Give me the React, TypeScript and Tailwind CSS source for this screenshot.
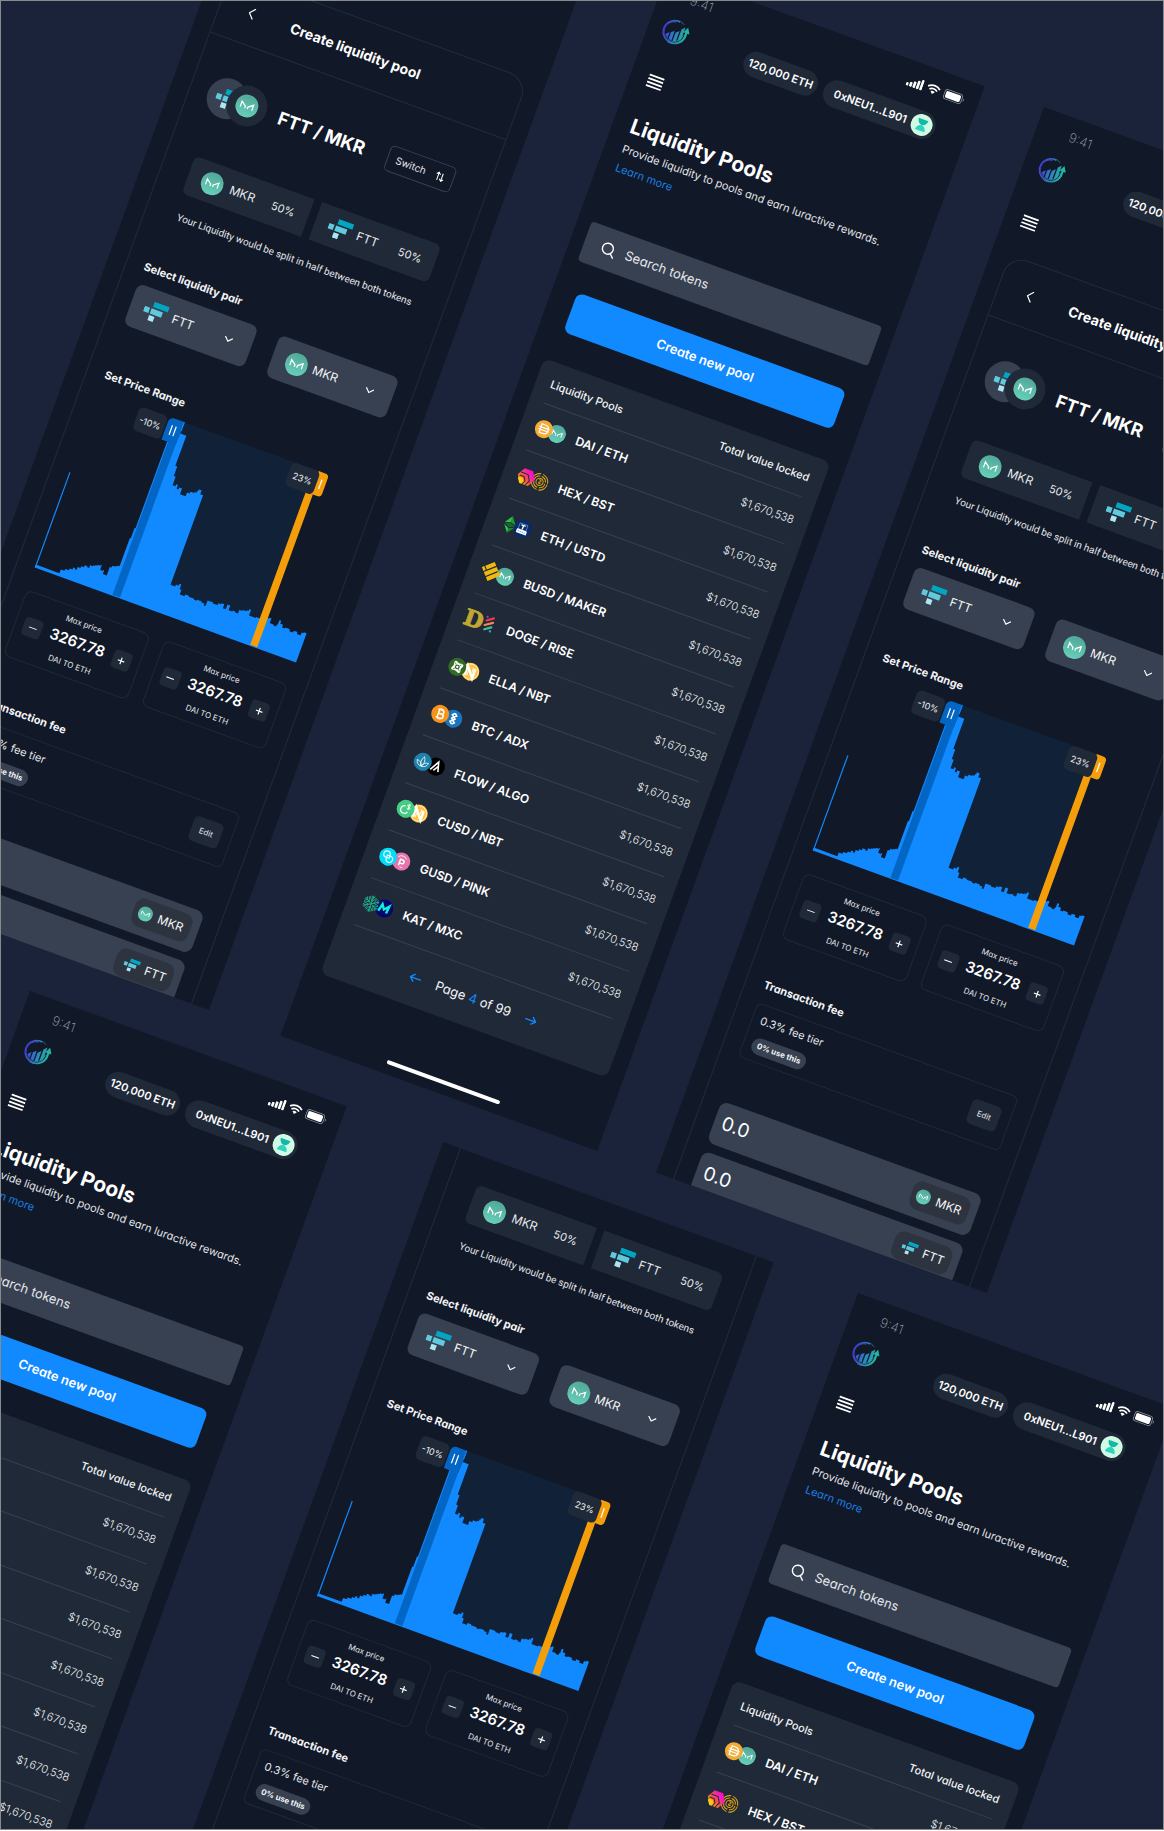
import type { ReactNode } from 'react'
import { useId } from 'react'

/* ---------- token artwork ---------- */

function MakerCoin({ className }: { className: string }) {
  const id = useId()
  return (
    <svg viewBox="0 0 24 24" className={className} aria-hidden="true">
      <defs>
        <linearGradient id={id} x1="0" y1="0" x2="0" y2="1">
          <stop offset="0" stopColor="#52a898" />
          <stop offset="1" stopColor="#66cfba" />
        </linearGradient>
      </defs>
      <circle cx="12" cy="12" r="12" fill={`url(#${id})`} />
      <path d="M5.6 15V8.9l5 3.8V15M13.4 15v-2.3l5-3.8V15" fill="none" stroke="#fff" strokeWidth="1.3" />
    </svg>
  )
}

function FttMark({ className }: { className: string }) {
  return (
    <svg viewBox="0 0 24 20" className={className} aria-hidden="true">
      <path fill="#02a6c2" d="M8 0h16v5.6H8z" />
      <path fill="#5fcade" d="M0 7.2h5.6v5.6H0zM7.2 7.2h12v5.6h-12z" />
      <path fill="#abe6f1" d="M7.2 14.4h5.6V20H7.2z" />
    </svg>
  )
}

function Coin({ fill, children }: { fill: string; children?: ReactNode }) {
  return (
    <svg viewBox="0 0 24 24" className="size-[18px] shrink-0 overflow-visible" aria-hidden="true">
      <circle cx="12" cy="12" r="12" fill={fill} />
      {children}
    </svg>
  )
}

function DaiCoin() {
  return (
    <Coin fill="#f5ac37">
      <path
        d="M7.5 6h4.6c3.6 0 6 2.5 6 6s-2.4 6-6 6H7.5zM5 10.3h14.5M5 13.7h14.5"
        fill="none"
        stroke="#fff"
        strokeWidth="1.6"
      />
    </Coin>
  )
}

function HexCoin() {
  const id = useId()
  return (
    <svg viewBox="0 0 24 24" className="size-[18px] shrink-0" aria-hidden="true">
      <defs>
        <linearGradient id={id} x1="0.9" y1="0" x2="0.1" y2="1">
          <stop offset="0" stopColor="#ff00c8" />
          <stop offset="0.3" stopColor="#f21fb4" />
          <stop offset="0.6" stopColor="#f5573f" />
          <stop offset="1" stopColor="#ffd000" />
        </linearGradient>
      </defs>
      <path d="M6 1.5h12L24 12l-6 10.500H6L0 12z" fill={`url(#${id})`} />
      <g fill="none" stroke="#1f2937" strokeWidth="1.3">
        <path d="M3.500 8h9.500l4.500 7.500-3.500 7" />
        <path d="M2.500 12.500h6.500l3 5-2 5" />
      </g>
      <path d="M3.500 14.500h4l2.500 4-2.500 4h-2L1.500 16.500z" fill="#ffc814" />
    </svg>
  )
}

function BstCoin() {
  return (
    <svg viewBox="0 0 24 24" className="size-[18px] shrink-0" aria-hidden="true">
      <g fill="none" stroke="#e0a412" strokeWidth="1.4">
        <circle cx="12" cy="12" r="11" strokeDasharray="15 2.5" />
        <circle cx="12" cy="12" r="7.8" strokeDasharray="10 2" />
        <circle cx="12" cy="12" r="4.8" />
        <path d="M10.500 9.500c2-.8 3.500 0 3 1.500-.3 1-2.500 1-2.500 2s1.500 1.500 3 .7" />
      </g>
    </svg>
  )
}

function EtcMark() {
  return (
    <svg viewBox="0 0 24 24" className="size-[18px] shrink-0 overflow-visible" aria-hidden="true">
      <path d="M13 .5 20.500 11 13 9z" fill="#1f9a34" />
      <path d="M13 .5 5.500 11 13 9z" fill="#2fc04a" />
      <path d="M5.500 12.300 13 10l7.500 2.300L13 16z" fill="#156b26" />
      <path d="M5.500 14 13 24V17.500z" fill="#35c44f" />
      <path d="M20.500 14 13 24V17.500z" fill="#1a8a2f" />
    </svg>
  )
}

function UstdCoin() {
  return (
    <Coin fill="#072a6c">
      <rect x="6.5" y="5.5" width="11" height="8" fill="none" stroke="#8ea6d6" strokeWidth="0.8" />
      <path d="M9 7.500h6M12 7.500V13" stroke="#fff" strokeWidth="1.8" />
      <rect x="5" y="13.500" width="14" height="5.500" rx="1" fill="#fff" />
      <path d="M7 16.300h10" stroke="#8ea6d6" strokeWidth="1.4" strokeDasharray="2 0.7" />
    </Coin>
  )
}

function BusdMark() {
  return (
    <svg viewBox="0 0 24 24" className="size-[18px] shrink-0 overflow-visible" aria-hidden="true">
      <g fill="#f0b90b" transform="rotate(-42 11 11.500)">
        <path d="M6.500 1.500H20v5.600H6.500zM1.500 8.700H20v5.600H1.500zM1.500 15.900H20v5.600H1.500z" />
        <path d="M1.500 1.500H5v5.600H1.500z" />
      </g>
    </svg>
  )
}

function DogeMark() {
  return (
    <svg viewBox="0 0 24 24" className="size-[18px] shrink-0 overflow-visible" aria-hidden="true">
      <text
        x="11"
        y="23"
        textAnchor="middle"
        fontFamily="DejaVu Serif, serif"
        fontWeight="700"
        fontSize="30"
        fill="#c2a633"
        stroke="#c2a633"
        strokeWidth="1.2"
      >
        D
      </text>
    </svg>
  )
}

function RiseMark() {
  return (
    <svg viewBox="0 0 24 24" className="size-[18px] shrink-0" aria-hidden="true">
      <g strokeWidth="3" strokeLinecap="round" fill="none">
        <path d="m9 8.500 8-6" stroke="#f0384f" />
        <path d="m8.500 15 9.500-6.500" stroke="#f5805a" />
        <path d="m10 20.500 8-5.500" stroke="#3fbf93" />
      </g>
      <circle cx="8.500" cy="3.500" r="1.600" fill="#7a4fb5" />
      <circle cx="18" cy="20.500" r="1.600" fill="#3b9ae0" />
    </svg>
  )
}

function EllaCoin() {
  return (
    <Coin fill="#336b25">
      <path
        d="M5.500 7.500c0-1.200.8-2 2-2 1.800 0 3 1 4.500 1s2.700-1 4.500-1c1.200 0 2 .8 2 2 0 1.800-1 3-1 4.500s1 2.700 1 4.500c0 1.200-.8 2-2 2-1.800 0-3-1-4.500-1s-2.700 1-4.500 1c-1.200 0-2-.8-2-2 0-1.800 1-3 1-4.500s-1-2.700-1-4.500z"
        fill="#fff"
        transform="rotate(8 12 12)"
      />
      <circle cx="12" cy="12" r="3.200" fill="#336b25" />
      <circle cx="12" cy="12" r="1.600" fill="#fff" />
      <path d="m7.500 7.500 2 2m7-2-2 2m-7 7 2-2m7 2-2-2" stroke="#336b25" strokeWidth="0.900" />
    </Coin>
  )
}

function NbtCoin() {
  return (
    <Coin fill="#ffc13d">
      <circle cx="12" cy="12" r="10.300" fill="none" stroke="#fff" strokeWidth="0.800" />
      <path d="M6 18.500v-13l11 14v-13" fill="none" stroke="#fff" strokeWidth="3.400" />
      <path d="M9 18.500V12M14.200 5.500v6.500" fill="none" stroke="#fff" strokeWidth="1.200" />
    </Coin>
  )
}

function BtcCoin() {
  return (
    <Coin fill="#f7931a">
      <path
        d="M9.500 6.500v11M7.500 6.500h6a2.600 2.600 0 0 1 0 5.200h-4m0 0h4.600a2.900 2.900 0 0 1 0 5.800H7.500M11 4.500v2m2.500-2v2M11 17.500v2m2.500-2v2"
        fill="none"
        stroke="#fff"
        strokeWidth="1.900"
      />
    </Coin>
  )
}

function AdxCoin() {
  return (
    <Coin fill="#1b75bc">
      <path
        d="m12 4.500 3 2.800-6 5.200m3-8-3 2.800 6 5.200M12 19.500l3-2.800-6-5.200m3 8-3-2.800 6-5.200"
        fill="none"
        stroke="#fff"
        strokeWidth="2.200"
      />
    </Coin>
  )
}

function FlowCoin() {
  return (
    <Coin fill="#1f82ab">
      <path
        d="M12 18.500c-3-4-3-9 0-13.500 3 4.500 3 9.500 0 13.500zM12 18c-4 .5-7-2-8-6.500 4 0 7 2.500 8 6.500zM12 18c4 .5 7-2 8-6.500-4 0-7 2.500-8 6.500z"
        fill="none"
        stroke="#fff"
        strokeWidth="1"
      />
    </Coin>
  )
}

function AlgoCoin() {
  return (
    <Coin fill="#000">
      <path
        d="M6 18 13.500 5l3.500 13M10.500 18l4.500-7.500"
        fill="none"
        stroke="#fff"
        strokeWidth="2.100"
      />
    </Coin>
  )
}

function CusdCoin() {
  return (
    <Coin fill="#45cd85">
      <path d="M10.500 8.500A5 5 0 1 0 15.600 15" fill="none" stroke="#fff" strokeWidth="1.600" />
      <path
        d="M17 6.200c-1.500-1-3.800-.6-3.700.9.100 1.700 3.800 1 3.900 2.800.1 1.600-2.500 1.900-4 .8M15.200 4v8.200"
        fill="none"
        stroke="#fff"
        strokeWidth="1.200"
      />
    </Coin>
  )
}

function GusdCoin() {
  return (
    <Coin fill="#00dcfa">
      <g fill="none" stroke="#fff" strokeWidth="1.400">
        <path d="M13.700 13.700H8.500a4.400 4.400 0 1 1 5.200-5.200z" />
        <path d="M10.300 10.300h5.200a4.400 4.400 0 1 1-5.200 5.200z" />
      </g>
    </Coin>
  )
}

function PinkCoin() {
  return (
    <Coin fill="#e874ac">
      <path d="M10 18v-8.500h3a2.600 2.600 0 0 1 0 5.200h-3" fill="none" stroke="#fff" strokeWidth="2" />
      <path d="M6 7.500a7 7 0 0 1 11.500-.5M12 19.500h4" fill="none" stroke="#fff" strokeWidth="1" />
    </Coin>
  )
}

function KatMark() {
  return (
    <svg viewBox="0 0 24 24" className="size-[18px] shrink-0" aria-hidden="true">
      <g fill="none" stroke="#1fb894" strokeWidth="1.100">
        {[0, 60, 120, 180, 240, 300].map((a) => (
          <path
            key={a}
            transform={`rotate(${a} 12 12)`}
            d="M12 12V.5M12 4.500l2.500-3M12 4.500 9.500 1.500M12 8.500l4.500-5.500M12 8.500 7.500 3"
          />
        ))}
      </g>
    </svg>
  )
}

function MxcCoin() {
  return (
    <Coin fill="#04066e">
      <circle cx="20" cy="2.500" r="1.400" fill="#0a1a8c" />
      <path d="M5.500 17.500 8 7.500l4 6 5.500-6-1 10" fill="none" stroke="#12f0d4" strokeWidth="3.200" />
    </Coin>
  )
}

/* ---------- shared phone chrome ---------- */

function BrandLogo() {
  const id = useId()
  const paint = `url(#${id})`
  return (
    <svg viewBox="0 0 32 30" className="h-[26px] w-7" role="img" aria-label="Home">
      <defs>
        <linearGradient id={id} x1="0" y1="0" x2="32" y2="0" gradientUnits="userSpaceOnUse">
          <stop offset="0" stopColor="#4a35e0" />
          <stop offset="0.5" stopColor="#2f7fc0" />
          <stop offset="1" stopColor="#20c49a" />
        </linearGradient>
      </defs>
      <g fill="none" stroke={paint}>
        <path d="M17 2.200A13 13 0 1 0 27.500 13" strokeWidth="1.600" />
        <path d="M13 3.500A11.500 11.500 0 1 0 25.600 15" strokeWidth="0.900" />
        <path d="M13 1.500c4-.7 7 .3 9.500 2" strokeWidth="0.700" />
        <path d="M11 28a14 14 0 0 0 17.500-11" strokeWidth="1.600" />
      </g>
      <g fill={paint}>
        <path d="M6 20.500 9.500 17v7.500c-1.600-1-2.800-2.200-3.500-4z" />
        <path d="M11 16.500 14.700 14v11.500c-1.300 0-2.500-.3-3.700-.8z" />
        <path d="M16.200 15.500 19.900 12v12.800c-1.300.5-2.500.7-3.700.7z" />
        <path d="M21.400 9.500 25 6v14c-.9 1.700-2 3-3.600 4z" />
        <path d="m28 5 4 7h-2.600v5l-2.400 2v-7h-2.500z" />
      </g>
    </svg>
  )
}

function StatusIcons() {
  return (
    <div className="flex items-center gap-1 text-white">
      <svg viewBox="0 0 17 11" className="h-[11px] w-[17px]" fill="currentColor" aria-hidden="true">
        <rect y="7.500" width="2.600" height="3.500" rx="1" />
        <rect x="3.600" y="6" width="2.600" height="5" rx="1" />
        <rect x="7.200" y="4.200" width="2.600" height="6.800" rx="1" />
        <rect x="10.800" y="2.200" width="2.600" height="8.800" rx="1" />
        <rect x="14.400" width="2.600" height="11" rx="1" />
      </svg>
      <svg viewBox="0 0 15 11" className="h-[11px] w-3.5" fill="none" stroke="currentColor" aria-hidden="true">
        <path d="M.8 3.900a9.600 9.600 0 0 1 13.400 0" strokeWidth="1.900" />
        <path d="M3.200 6.500a6.200 6.200 0 0 1 8.600 0" strokeWidth="1.800" />
        <path d="M5.100 8.200a3.500 3.500 0 0 1 4.800 0L7.500 10.800z" fill="currentColor" stroke="none" />
      </svg>
      <svg viewBox="0 0 22 11" className="h-[11px] w-[22px]" aria-hidden="true">
        <rect x="0.500" y="0.500" width="18.500" height="10" rx="3" fill="none" stroke="#7d838e" />
        <rect x="2" y="2" width="15.500" height="7" rx="1.600" fill="#fff" />
        <path d="M20.300 3.800c1.400.6 1.400 2.800 0 3.400z" fill="#7d838e" />
      </svg>
    </div>
  )
}

function Clock() {
  return <time className="text-[13px] font-extralight text-gray-400">9:41</time>
}

function WalletPills() {
  return (
    <>
      <span className="flex h-[26px] w-[78px] items-center justify-center rounded-full bg-[#1f2937] text-[11px] font-semibold text-white">
        120,000 ETH
      </span>
      <button className="flex h-7 w-[118px] items-center justify-between rounded-full bg-[#1f2937] pr-[3px] pl-[11px] text-[11px] font-semibold text-white">
        0xNEU1...L901
        <svg viewBox="0 0 24 24" className="size-[22px]" aria-hidden="true">
          <circle cx="12" cy="12" r="12" fill="#d1fae5" />
          <path d="M6.500 5.500h11c0 3-2 6-5.500 6.500-3.500-.5-5.500-3.500-5.500-6.500z" fill="#14b8a6" />
          <path d="M6.500 18.500h11c0-3-2-6-5.500-6.500-3.500.5-5.500 3.500-5.500 6.500z" fill="#2dd4bf" />
        </svg>
      </button>
    </>
  )
}

function MenuButton() {
  return (
    <button aria-label="Menu" className="block h-3.5 w-4">
      <svg viewBox="0 0 16 14" className="h-3.5 w-4" aria-hidden="true">
        <path d="M0 1.500h16M0 5.200h16M0 8.900h16M0 12.600h16" stroke="#fff" strokeWidth="1.700" />
      </svg>
    </button>
  )
}

/* ---------- pools list screen ---------- */

const pools: { name: string; first: ReactNode; second: ReactNode }[] = [
  { name: 'DAI / ETH', first: <DaiCoin />, second: <MakerCoin className="size-[18px] shrink-0" /> },
  { name: 'HEX / BST', first: <HexCoin />, second: <BstCoin /> },
  { name: 'ETH / USTD', first: <EtcMark />, second: <UstdCoin /> },
  { name: 'BUSD / MAKER', first: <BusdMark />, second: <MakerCoin className="size-[18px] shrink-0" /> },
  { name: 'DOGE / RISE', first: <DogeMark />, second: <RiseMark /> },
  { name: 'ELLA / NBT', first: <EllaCoin />, second: <NbtCoin /> },
  { name: 'BTC / ADX', first: <BtcCoin />, second: <AdxCoin /> },
  { name: 'FLOW / ALGO', first: <FlowCoin />, second: <AlgoCoin /> },
  { name: 'CUSD / NBT', first: <CusdCoin />, second: <NbtCoin /> },
  { name: 'GUSD / PINK', first: <GusdCoin />, second: <PinkCoin /> },
  { name: 'KAT / MXC', first: <KatMark />, second: <MxcCoin /> },
]

function Arrow({ className }: { className: string }) {
  return (
    <svg viewBox="0 0 12 10" className={className} fill="none" stroke="#1189ff" strokeWidth="1.400" aria-hidden="true">
      <path d="M12 5H1M5 1 1 5l4 4" />
    </svg>
  )
}

function PoolsScreen() {
  return (
    <div className="w-[337px] bg-[#111827] pb-2.5">
      <div className="flex h-10 items-center justify-between pr-3.5 pl-[31px]">
        <Clock />
        <StatusIcons />
      </div>
      <div className="mt-0.5 flex h-[30px] items-start justify-between pr-8 pl-3.5">
        <BrandLogo />
        <div className="mt-0.5 flex items-center gap-[7px]">
          <WalletPills />
        </div>
      </div>
      <div className="mt-[30px] px-[18px]">
        <MenuButton />
        <h2 className="mt-7 text-[21px] leading-7 font-bold text-white">Liquidity Pools</h2>
        <p className="text-[11px] leading-5 whitespace-nowrap text-gray-200">
          Provide liquidity to pools and earn luractive rewards.
        </p>
        <a href="#learn" className="block w-fit text-[11px] leading-5 text-[#1a80e6]">
          Learn more
        </a>
      </div>
      <label className="mx-3.5 mt-[49px] flex h-[42px] items-center gap-2.5 rounded-[4px] bg-[#374151] pl-[18px]">
        <svg viewBox="0 0 15 15" className="size-[15px]" fill="none" stroke="#fff" strokeWidth="1.400" aria-hidden="true">
          <circle cx="6.500" cy="6.500" r="5.500" />
          <path d="m10.400 10.400 4 4" />
        </svg>
        <input
          aria-label="Search tokens"
          placeholder="Search tokens"
          className="min-w-0 flex-1 bg-transparent text-[13px] text-white outline-none placeholder:text-gray-200"
        />
      </label>
      <button className="mx-[25px] mt-[30px] block h-[42px] w-[286px] rounded-[7px] bg-[#1189ff] text-[13px] font-semibold text-white">
        Create new pool
      </button>
      <div className="mx-4 mt-[31px] rounded-[8px] bg-[#1f2937] px-[15px]">
        <table className="h-[598px] w-full">
          <thead>
            <tr className="h-[42px] border-b border-[#374151] text-[11px] text-gray-100">
              <th className="pt-[3px] text-left font-medium">Liquidity Pools</th>
              <th className="pt-[3px] text-right font-medium">Total value locked</th>
            </tr>
          </thead>
          <tbody>
            {pools.map((pool) => (
              <tr key={pool.name} className="border-b border-[#374151]">
                <td>
                  <div className="flex items-center">
                    <span className="relative z-10">{pool.first}</span>
                    <span className="-ml-1">{pool.second}</span>
                    <span className="ml-[11px] text-[12px] font-semibold text-white">{pool.name}</span>
                  </div>
                </td>
                <td className="text-right text-[11px] font-light text-gray-100">$1,670,538</td>
              </tr>
            ))}
          </tbody>
        </table>
        <div className="flex h-[57px] items-center justify-center gap-4 text-[13px] text-gray-100">
          <button aria-label="Previous page">
            <Arrow className="h-2.5 w-3" />
          </button>
          <span>
            Page <span className="text-[#1189ff]">4</span> of 99
          </span>
          <button aria-label="Next page">
            <Arrow className="h-2.5 w-3 rotate-180" />
          </button>
        </div>
      </div>
      <div className="mx-auto mt-[58px] h-1 w-[120px] rounded-full bg-white" />
    </div>
  )
}

/* ---------- create pool screen ---------- */

/* Left edge and top of every step of the liquidity histogram. */
const steps: [number, number][] = [
  [0, 184], [25, 180], [29, 178], [33, 176], [36, 174], [38, 175], [40, 172], [43, 170], [46, 168], [49, 169],
  [51, 166], [54, 165], [56, 164], [58, 163], [61, 162], [62, 167], [65, 166], [66, 170], [70, 161], [72, 159],
  [75, 158], [77, 157], [79, 127], [80, 116], [81, 24], [90, 12], [97, 44], [99, 54], [101, 63], [104, 61],
  [106, 65], [108, 63], [111, 69], [117, 65], [120, 63], [124, 62], [126, 60], [127, 58], [130, 62], [133, 157],
  [138, 155], [141, 153], [143, 158], [145, 163], [150, 161], [154, 162], [160, 163], [163, 162], [168, 163],
  [171, 165], [173, 159], [179, 160], [184, 158], [187, 157], [190, 161], [193, 156], [196, 161], [200, 160],
  [203, 161], [206, 157], [209, 156], [213, 155], [215, 153], [217, 159], [224, 158], [229, 155], [237, 154],
  [239, 159], [243, 160], [246, 158], [247, 153], [249, 156], [252, 159], [255, 158], [260, 160], [264, 158],
  [268, 160], [272, 157], [274, 156],
]
const histogram = `M0 187${steps.map(([x, y]) => `H${x}V${y}`).join('')}H277V187Z`

function PriceChart() {
  return (
    <div className="relative mt-2.5">
      <svg viewBox="0 0 277 187" className="block w-full overflow-visible" role="img" aria-label="Liquidity by price">
        <path d="M90 0h138v187H90z" fill="#112137" />
        <path d={histogram} fill="#1189ff" />
        <path d="M.5 86v101" stroke="#1189ff" strokeWidth="1.200" />
        <path d="M82 23h8v163h-8z" fill="#0466c4" />
        <path d="M80 0h11v8l-1 16H75V5a5 5 0 0 1 5-5z" fill="#0466c4" />
        <path d="M90.500 0v9" stroke="#1189ff" />
        <path d="M80.500 7v10M84.500 7v10" stroke="#fff" strokeWidth="1.200" />
        <path d="M228 24h7.500v162H228z" fill="#f59e0b" />
        <path d="M233 0h7a4 4 0 0 1 4 4v16a4 4 0 0 1-4 4h-7z" fill="#f59e0b" />
        <path d="M239 7v10" stroke="#fff" strokeWidth="1.200" />
      </svg>
      <span className="absolute top-0 left-[44px] flex h-[25px] w-[30px] items-center justify-center rounded-[5px] bg-[#1f2937] text-[9px] text-gray-100">
        -10%
      </span>
      <span className="absolute top-0 left-[206px] flex h-[25px] w-[30px] items-center justify-center rounded-[5px] bg-[#1f2937] text-[9px] text-gray-100">
        23%
      </span>
    </div>
  )
}

function PriceBox() {
  return (
    <div className="flex h-[70px] items-center justify-between rounded-[7px] border border-[#1f2937] px-2">
      <button aria-label="Decrease" className="grid size-[19px] place-items-center rounded-[4px] bg-[#1f2937]">
        <span className="h-px w-2 bg-white" />
      </button>
      <div className="text-center text-[8px] leading-3 text-gray-200">
        <div>Max price</div>
        <div className="mt-1 mb-[7px] text-[15px] leading-5 font-semibold text-white">3267.78</div>
        <div>DAI TO ETH</div>
      </div>
      <button aria-label="Increase" className="grid size-[19px] place-items-center rounded-[4px] bg-[#1f2937]">
        <svg viewBox="0 0 8 8" className="size-2" stroke="#fff" strokeWidth="1.200" aria-hidden="true">
          <path d="M4 .5v7M.5 4h7" />
        </svg>
      </button>
    </div>
  )
}

function TokenSelect({ icon, token }: { icon: ReactNode; token: string }) {
  return (
    <label className="flex h-11 items-center rounded-[7px] bg-[#374151] pr-[19px] pl-3.5">
      {icon}
      <select
        aria-label="Token"
        defaultValue={token}
        className="ml-1.5 min-w-0 flex-1 appearance-none bg-transparent text-[12px] text-gray-100 outline-none"
      >
        <option>FTT</option>
        <option>MKR</option>
      </select>
      <svg viewBox="0 0 10 6" className="h-1.5 w-2.5" fill="none" stroke="#fff" strokeWidth="1.200" aria-hidden="true">
        <path d="m1 1 4 4 4-4" />
      </svg>
    </label>
  )
}

function AmountRow({ icon, token }: { icon: ReactNode; token: string }) {
  return (
    <div className="mb-[9px] flex h-11 items-center rounded-[8px] bg-[#374151] px-2">
      <input
        aria-label={`${token} amount`}
        defaultValue="0.0"
        className="min-w-0 flex-1 bg-transparent text-[19px] text-white outline-none"
      />
      <button className="flex h-[29px] w-[60px] items-center gap-1.5 rounded-[9px] bg-[#2d3440] pl-[5px] text-[12px] text-gray-100">
        {icon}
        {token}
      </button>
    </div>
  )
}

function SectionTitle({ children }: { children: ReactNode }) {
  return <h4 className="text-[11px] leading-4 font-bold text-gray-100">{children}</h4>
}

function CreateScreen() {
  return (
    <div className="h-[1134px] w-[352px] overflow-hidden bg-[#111827]">
      <div className="flex h-10 items-center justify-between pr-3.5 pl-[34px]">
        <Clock />
        <StatusIcons />
      </div>
      <div className="mt-1 flex h-7 items-start justify-between pr-[42px] pl-[15px]">
        <BrandLogo />
        <div className="mt-0.5 flex items-center gap-[7px]">
          <WalletPills />
        </div>
      </div>
      <div className="mt-[35px] px-[18px]">
        <MenuButton />
      </div>
      <div className="mx-[18px] mt-[29px] h-[1100px] rounded-[20px] border border-[#1f2d3a]">
        <div className="flex h-16 items-center border-b border-[#1f2d3a] pl-[29px]">
          <button aria-label="Back">
            <svg viewBox="0 0 7 12" className="h-3 w-[7px]" fill="none" stroke="#fff" strokeWidth="1.200" aria-hidden="true">
              <path d="M6 .5 1 6l5 5.500" />
            </svg>
          </button>
          <h2 className="ml-[38px] text-[14px] font-bold text-white [font-feature-settings:normal]">
            Create liquidity pool
          </h2>
        </div>
        <div className="mt-9 flex items-center pr-[35px] pl-[18px]">
          <span className="grid size-[41px] place-items-center rounded-full bg-[#374151]">
            <FttMark className="w-6" />
          </span>
          <span className="-ml-5 grid size-[41px] place-items-center rounded-full bg-[#1f2937]">
            <MakerCoin className="size-[23px]" />
          </span>
          <h3 className="ml-[13px] text-[18px] font-bold whitespace-nowrap text-white">FTT / MKR</h3>
          <button className="ml-auto flex h-[27px] w-[70px] items-center justify-between rounded-[5px] border border-[#374151] px-2 text-[10px] text-gray-200">
            Switch
            <svg viewBox="0 0 10 10" className="size-2.5" fill="none" stroke="#fff" aria-hidden="true">
              <path d="M3 9V1M1 3l2-2 2 2M7.200 1v8M5.200 7l2 2 2-2" />
            </svg>
          </button>
        </div>
        <div className="mt-11 mr-6 ml-7 grid grid-cols-2 gap-2 text-[12px] text-gray-200">
          <div className="flex h-10 items-center rounded-l-[6px] bg-[#1f2937] pr-3.5 pl-3.5">
            <MakerCoin className="mr-[7px] size-[23px]" />
            MKR
            <span className="ml-auto text-[11px]">50%</span>
          </div>
          <div className="flex h-10 items-center rounded-r-[6px] bg-[#1f2937] pr-3.5 pl-3.5">
            <FttMark className="mr-1.5 w-6" />
            FTT
            <span className="ml-auto text-[11px]">50%</span>
          </div>
        </div>
        <p className="mt-4 pl-8 font-['Roboto',sans-serif] text-[10px] leading-4 whitespace-nowrap text-gray-200">
          Your Liquidity would be split in half between both tokens
        </p>
        <div className="mx-[18px] mt-[41px]">
          <SectionTitle>Select liquidity pair</SectionTitle>
          <div className="mt-2.5 mb-[45px] grid grid-cols-2 gap-[23px]">
            <TokenSelect token="FTT" icon={<FttMark className="w-6" />} />
            <TokenSelect token="MKR" icon={<MakerCoin className="size-[23px]" />} />
          </div>
          <SectionTitle>Set Price Range</SectionTitle>
          <PriceChart />
          <div className="mt-[23px] mb-[41px] grid grid-cols-2 gap-[15px]">
            <PriceBox />
            <PriceBox />
          </div>
          <SectionTitle>Transaction fee</SectionTitle>
          <div className="mt-[11px] mb-[47px] flex h-[58px] items-center justify-between rounded-[6px] border border-[#1f2937] pr-2.5 pl-2">
            <div>
              <div className="text-[11px] leading-4 text-gray-200">0.3% fee tier</div>
              <div className="mt-[9px] flex h-[17px] w-[57px] items-center justify-center rounded-full bg-[#374151] text-[8px] font-bold text-gray-100">
                0% use this
              </div>
            </div>
            <button className="h-[26px] w-[31px] rounded-[5px] bg-[#1f2937] text-[8px] text-gray-200">Edit</button>
          </div>
          <AmountRow token="MKR" icon={<MakerCoin className="size-[15px]" />} />
          <AmountRow token="FTT" icon={<FttMark className="ml-1 w-4" />} />
        </div>
      </div>
    </div>
  )
}

/* ---------- mockup canvas ---------- */

export default function App() {
  return (
    <div className="h-screen bg-white pb-px">
      <main className="relative h-full overflow-hidden border border-[#888a8c] bg-[#1a233a] font-['Inter',sans-serif] [font-feature-settings:'cv11']">
        <section className="absolute top-[-177px] left-[265px] origin-top-left rotate-20">
          <CreateScreen />
        </section>
        <section className="absolute top-[-30px] left-[667px] origin-top-left rotate-20">
          <PoolsScreen />
        </section>
        <section className="absolute top-[106px] left-[1043px] origin-top-left rotate-20">
          <CreateScreen />
        </section>
        <section className="absolute top-[990px] left-[29px] origin-top-left rotate-20">
          <PoolsScreen />
        </section>
        <section className="absolute top-[1141px] left-[442px] flex h-[826px] origin-top-left rotate-20 items-end overflow-hidden">
          <CreateScreen />
        </section>
        <section className="absolute top-[1292px] left-[857px] origin-top-left rotate-20">
          <PoolsScreen />
        </section>
      </main>
    </div>
  )
}
